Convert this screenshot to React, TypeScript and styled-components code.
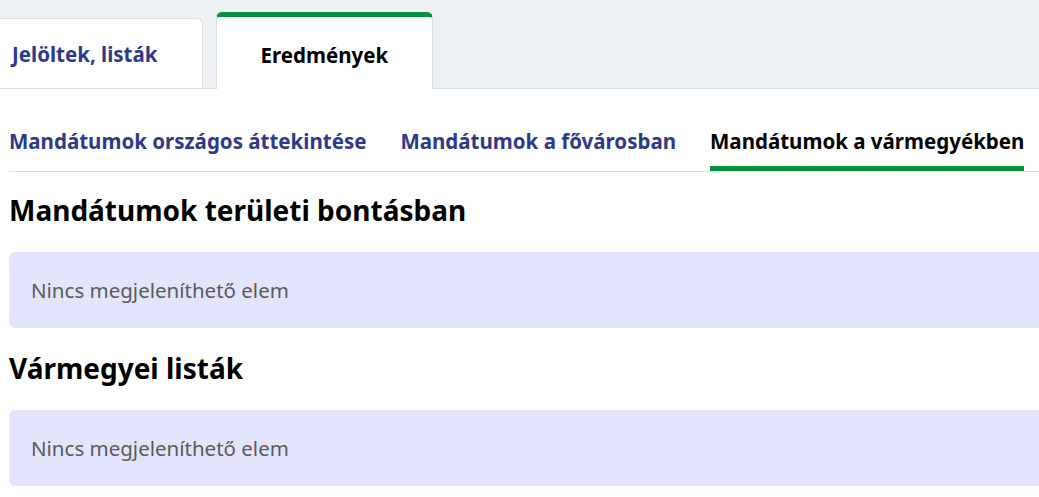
import React, { useState } from 'react';
import styled, { createGlobalStyle } from 'styled-components';

const GlobalStyle = createGlobalStyle`
  html, body {
    margin: 0;
    padding: 0;
    background: #ffffff;
    overflow: hidden;
  }
  body {
    font-family: "Noto Sans", "Open Sans", Arial, sans-serif;
    color: #000;
  }
`;

const mainTabs = ['Jelöltek, listák', 'Eredmények'];
const subTabs = [
  'Mandátumok országos áttekintése',
  'Mandátumok a fővárosban',
  'Mandátumok a vármegyékben',
];

const App = () => {
  const [mainTab, setMainTab] = useState(1);
  const [subTab, setSubTab] = useState(2);

  return (
    <Page>
      <GlobalStyle />

      {/* felső fülsor */}
      <TabBar>
        {mainTabs.map((t, i) => (
          <MainTab key={t} $active={i === mainTab} $first={i === 0} onClick={() => setMainTab(i)}>
            {t}
          </MainTab>
        ))}
      </TabBar>

      <Content>
        {/* al-fülek */}
        <SubTabRow>
          {subTabs.map((t, i) => (
            <SubTab key={t} $active={i === subTab} onClick={() => setSubTab(i)}>
              {t}
            </SubTab>
          ))}
        </SubTabRow>

        <SectionTitle>Mandátumok területi bontásban</SectionTitle>
        <EmptyBox>Nincs megjeleníthető elem</EmptyBox>

        <SectionTitle>Vármegyei listák</SectionTitle>
        <EmptyBox>Nincs megjeleníthető elem</EmptyBox>
      </Content>
    </Page>
  );
};

const Page = styled.div`
  width: 1100px;
`;

// felső szürke sáv a fő fülekkel
const TabBar = styled.div`
  display: flex;
  align-items: flex-end;
  gap: 13px;
  height: 88px;
  background-color: #eef1f4;
  border-bottom: 1px solid #dcdfe3;
`;

const MainTab = styled.div<{ $active: boolean; $first: boolean }>`
  display: flex;
  align-items: center;
  justify-content: center;
  box-sizing: border-box;
  padding: ${(p) => (p.$active ? '4px 44px 0' : '0 44px')};
  margin-left: ${(p) => (p.$first ? '-33px' : '0')};
  height: ${(p) => (p.$active ? '77px' : '70px')};
  margin-bottom: ${(p) => (p.$active ? '-1px' : '0')};
  background-color: #ffffff;
  border: 1px solid #dcdfe3;
  border-bottom: none;
  border-top: ${(p) => (p.$active ? '5px solid #0a8f3f' : '1px solid #dcdfe3')};
  border-radius: 6px 6px 0 0;
  font-size: 20.5px;
  font-weight: 700;
  color: ${(p) => (p.$active ? '#000000' : '#2e3a87')};
  cursor: pointer;
`;

const Content = styled.div`
  padding-left: 9px;
`;

const SubTabRow = styled.div`
  display: flex;
  gap: 34px;
  margin-top: 38px;
  border-bottom: 1px solid #dcdfe3;
`;

const SubTab = styled.div<{ $active: boolean }>`
  padding: 0 0 11px;
  font-size: 20.5px;
  font-weight: 700;
  line-height: 28px;
  color: ${(p) => (p.$active ? '#000000' : '#2e3a87')};
  border-bottom: 5px solid ${(p) => (p.$active ? '#0a8f3f' : 'transparent')};
  cursor: pointer;
`;

const SectionTitle = styled.h2`
  margin: 0;
  padding: 19px 0 23px;
  font-size: 28px;
  font-weight: 700;
  line-height: 38px;
`;

const EmptyBox = styled.div`
  display: flex;
  align-items: center;
  height: 76px;
  box-sizing: border-box;
  margin-bottom: 2px;
  padding: 0 22px;
  background-color: #e2e5fc;
  border-radius: 6px;
  font-size: 20.5px;
  color: #5a5a5a;
`;

export default App;
